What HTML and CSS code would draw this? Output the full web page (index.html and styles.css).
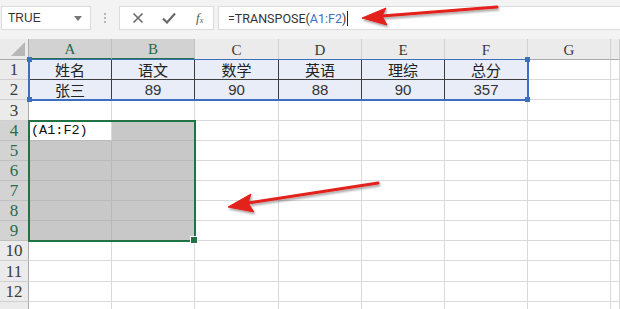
FILE: index.html
```html
<!DOCTYPE html>
<html>
<head>
  <meta charset="utf-8">
  <title>TRANSPOSE</title>
  <link rel="stylesheet" href="styles.css">
</head>
<body>
  <!--formula bar-->
  <div class="toolbar">
    <div class="namebox">
      <span>TRUE</span>
      <svg class="caret" width="8" height="5" viewBox="0 0 8 5"><path d="M0 0H8L4 5Z" fill="#777"/></svg>
    </div>
    <div class="grip"><i></i><i></i><i></i></div>
    <div class="fxbox">
      <svg width="12" height="12" viewBox="0 0 12 12"><path d="M1.5 1.5L10.5 10.5M10.5 1.5L1.5 10.5" stroke="#6a6a6a" stroke-width="1.6"/></svg>
      <svg width="14" height="12" viewBox="0 0 14 12"><path d="M1 6.5L5 10.5L13 1.5" stroke="#6a6a6a" stroke-width="2.2" fill="none"/></svg>
      <span class="fx">f<sub>x</sub></span>
    </div>
    <div class="formula">=TRANSPOSE(<span class="ref">A1:F2</span>)<span class="cursor"></span></div>
  </div>
  <!--sheet-->
  <div class="sheet">
    <div class="grid" id="grid"></div>
    <div class="refbox"><i class="h tl"></i><i class="h tr"></i><i class="h bl"></i><i class="h br"></i></div>
    <div class="selbox"><i class="fill"></i></div>
  </div>
  <svg class="arrows" width="620" height="309" viewBox="0 0 620 309">
    <defs>
      <filter id="sh" x="-10%" y="-50%" width="120%" height="200%">
        <feDropShadow dx="1" dy="2" stdDeviation="1.2" flood-color="#000" flood-opacity="0.35"/>
      </filter>
    </defs>
    <g fill="#e3201c" stroke="#e3201c" filter="url(#sh)">
      <line x1="497" y1="7" x2="382" y2="16" stroke-width="3" stroke-linecap="round"/>
      <path d="M362 18L386 8L382 16L387 25Z" stroke-width="1"/>
      <line x1="378" y1="183" x2="248" y2="203" stroke-width="3" stroke-linecap="round"/>
      <path d="M228 207L251 194L248 203L254 212Z" stroke-width="1"/>
    </g>
  </svg>
  <script>
    var cols = ['A', 'B', 'C', 'D', 'E', 'F', 'G', ''];
    var data = {
      1: ['姓名', '语文', '数学', '英语', '理综', '总分'],
      2: ['张三', '89', '90', '88', '90', '357']
    };
    var grid = document.getElementById('grid');
    function cell(cls, text) {
      var d = document.createElement('div');
      d.className = cls;
      if (text) d.textContent = text;
      grid.appendChild(d);
      return d;
    }
    // header row
    cell('corner').innerHTML = '<span class="tri"></span>';
    for (var c = 0; c < cols.length; c++) {
      cell('colhead' + (c < 2 ? ' sel' : ''), cols[c]);
    }
    // rows (13th only peeks in at the bottom edge)
    for (var r = 1; r <= 13; r++) {
      cell('rowhead' + (r >= 4 && r <= 9 ? ' sel' : ''), r < 13 ? String(r) : '');
      for (var c = 0; c < cols.length; c++) {
        var cls = 'cell';
        var text = '';
        if (data[r] && c < 6) {
          cls += ' data r' + r;
          text = data[r][c];
          if (/^\d+$/.test(text)) cls += ' num';
        }
        if (r >= 4 && r <= 9 && c < 2) {
          cls += (r == 4 && c == 0) ? ' active' : ' gray';
          if (r == 4 && c == 0) text = '(A1:F2)';
        }
        cell(cls, text);
      }
    }
  </script>
</body>
</html>
```
FILE: styles.css
```css
html, body {
  margin: 0;
  padding: 0;
  width: 620px;
  height: 309px;
  overflow: hidden;
  background: #fff;
  position: relative;
}
.toolbar {
  height: 39px;
  background: #f3f3f3;
  display: flex;
  align-items: flex-start;
  padding-top: 6px;
  box-sizing: border-box;
  font-family: "Liberation Sans", Arial, sans-serif;
}
.namebox {
  margin-left: 1px;
  width: 90px;
  height: 24px;
  box-sizing: border-box;
  background: #fff;
  border: 1px solid #dcdcdc;
  display: flex;
  align-items: center;
  justify-content: space-between;
  padding: 0 8px 0 6px;
  font-size: 12px;
  color: #333;
}
.grip {
  width: 28px;
  height: 24px;
  display: flex;
  flex-direction: column;
  align-items: center;
  justify-content: center;
  gap: 2px;
}
.grip i {
  width: 2px;
  height: 2px;
  background: #b5b5b5;
}
.fxbox {
  width: 95px;
  height: 24px;
  box-sizing: border-box;
  background: #fff;
  border: 1px solid #dcdcdc;
  display: flex;
  align-items: center;
  padding-left: 12px;
  gap: 18px;
}
.fx {
  font-family: "Liberation Serif", serif;
  font-style: italic;
  font-size: 13px;
  color: #555;
  margin-left: 2px;
}
.fx sub {
  font-size: 8px;
  vertical-align: -1px;
}
.formula {
  flex: 1;
  margin-left: 4px;
  height: 24px;
  box-sizing: border-box;
  background: #fff;
  border: 1px solid #dcdcdc;
  border-right: none;
  display: flex;
  align-items: center;
  padding-left: 9px;
  font-family: Roboto, "Liberation Sans", sans-serif;
  font-size: 12.5px;
  color: #333;
}
.formula .ref {
  color: #3c6fc4;
}
.cursor {
  width: 1px;
  height: 15px;
  background: #222;
  margin-left: 1px;
}

.sheet {
  position: relative;
}
.grid {
  display: grid;
  grid-template-columns: 29px 83px 83px 84px 83px 83px 83px 83px 9px;
  grid-template-rows: 21px 20px 20px 21px 20px 20px 20px 20px 20px 20px 20px 21px 20px 20px;
}
.corner, .colhead, .rowhead {
  background: #ebebeb;
  color: #3a3a3a;
  font-family: "Liberation Serif", serif;
  display: flex;
  align-items: center;
  justify-content: center;
  box-sizing: border-box;
  line-height: 1;
}
.corner {
  border-right: 1px solid #ababab;
  border-bottom: 1px solid #ababab;
  position: relative;
}
.tri {
  position: absolute;
  right: 3px;
  bottom: 3px;
  width: 0;
  height: 0;
  border-left: 14px solid transparent;
  border-bottom: 14px solid #b7b7b7;
}
.colhead {
  font-size: 15px;
  border-right: 1px solid #d0d0d0;
  border-bottom: 1px solid #ababab;
  padding-top: 2px;
}
.colhead.sel {
  background: #d2d2d2;
  color: #1f6b46;
  border-bottom: 2px solid #217346;
  border-right-color: #c0c0c0;
}
.rowhead {
  font-size: 17px;
  border-right: 1px solid #ababab;
  border-bottom: 1px solid #d0d0d0;
}
.rowhead.sel {
  background: #d3d3d3;
  color: #2a6a4a;
  border-bottom-color: #c0c0c0;
}
.cell {
  border-right: 1px solid #dadada;
  border-bottom: 1px solid #dadada;
  box-sizing: border-box;
  font-size: 15px;
  line-height: 1;
  color: #222;
  display: flex;
  align-items: center;
  justify-content: center;
  white-space: nowrap;
  overflow: hidden;
}
.cell.data {
  background: #e8edf7;
  border-right: 1px solid #3d3d3d;
  font-family: "Noto Sans CJK SC", sans-serif;
}
.cell.data.r1 {
  border-bottom: 1px solid #3d3d3d;
}
.cell.num {
  font-family: "Liberation Sans", Arial, sans-serif;
  font-size: 15px;
  color: #333;
}
.cell.gray {
  background: #c8c8c8;
  border-right-color: #b9b9b9;
  border-bottom-color: #b9b9b9;
}
.cell.active {
  background: #fff;
  justify-content: flex-start;
  padding-left: 2px;
  font-family: "Liberation Mono", monospace;
  font-size: 13.5px;
  color: #111;
  border-bottom-color: #b9b9b9;
}

/* reference highlight A1:F2 */
.refbox {
  position: absolute;
  left: 28px;
  top: 20px;
  width: 501px;
  height: 42px;
  box-sizing: border-box;
  border: 2px solid #3e6ec2;
  border-top-width: 1px;
}
.refbox .h {
  position: absolute;
  width: 5px;
  height: 5px;
  background: #3e6ec2;
}
.refbox .tl { left: -3px; top: -3px; }
.refbox .tr { right: -3px; top: -3px; }
.refbox .bl { left: -3px; bottom: -3px; }
.refbox .br { right: -3px; bottom: -3px; }

/* selection A4:B9 */
.selbox {
  position: absolute;
  left: 28px;
  top: 81px;
  width: 168px;
  height: 122px;
  box-sizing: border-box;
  border: 2px solid #217346;
}
.selbox .fill {
  position: absolute;
  right: -4px;
  bottom: -4px;
  width: 6px;
  height: 6px;
  background: #217346;
  border: 1px solid #fff;
}

.arrows {
  position: absolute;
  left: 0;
  top: 0;
  pointer-events: none;
}
```
